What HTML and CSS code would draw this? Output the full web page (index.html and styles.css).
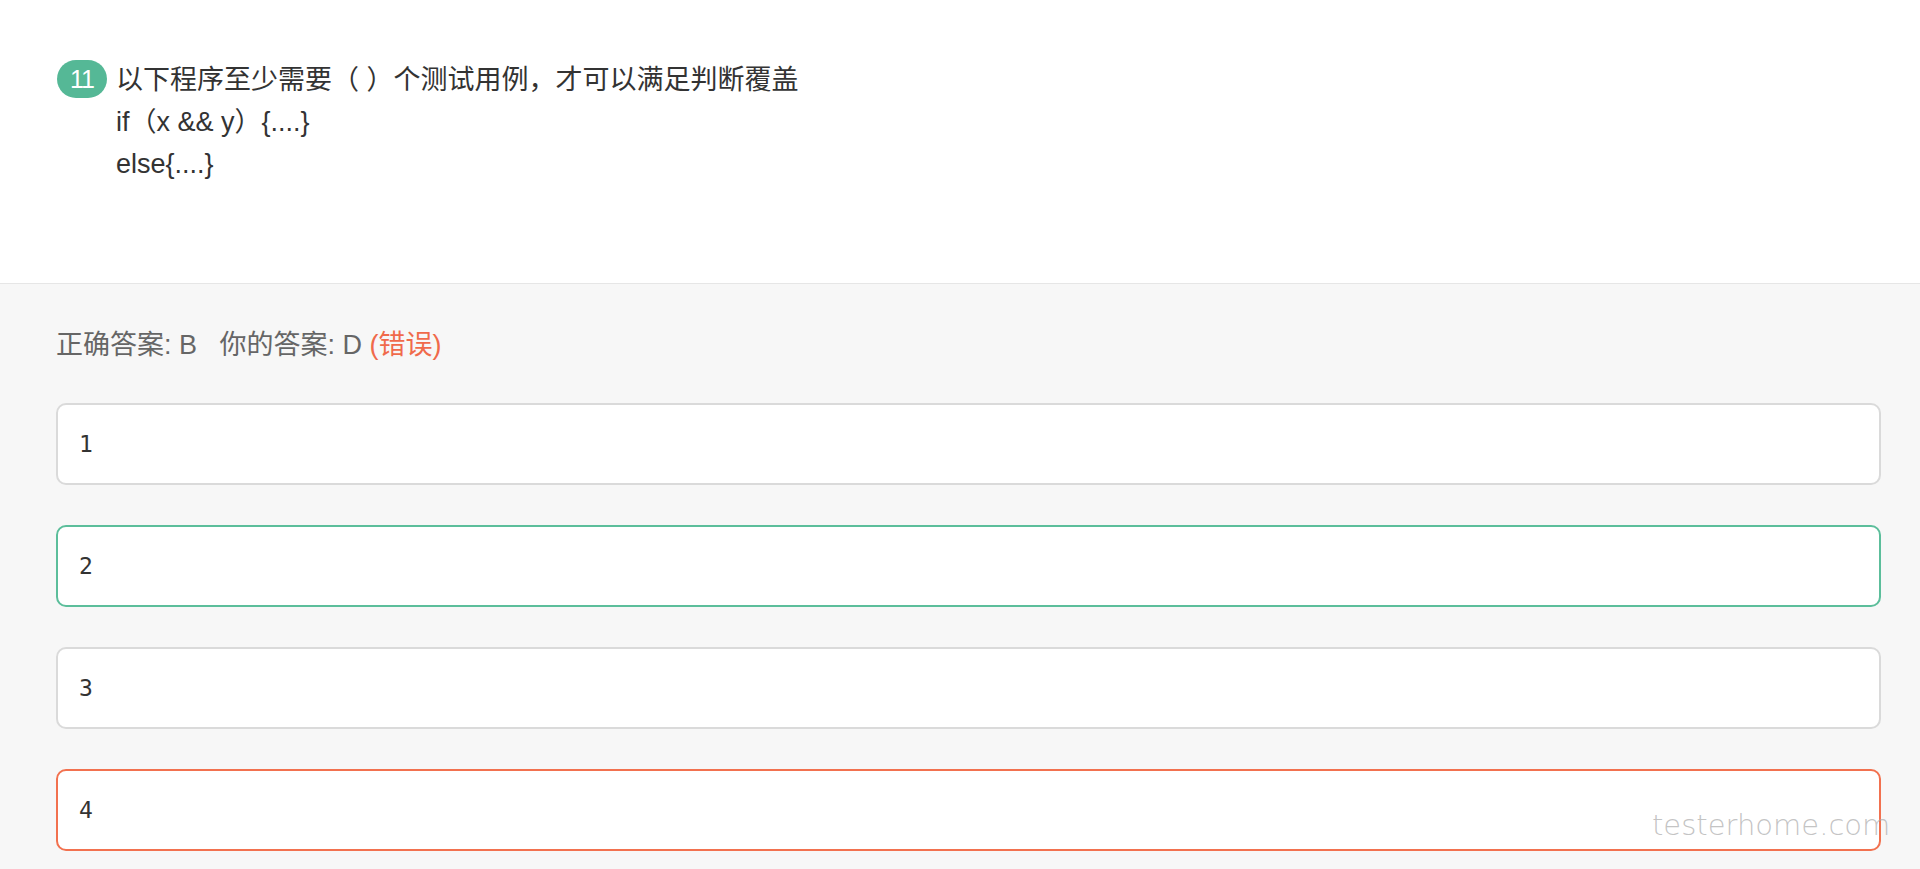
FILE: index.html
```html
<!DOCTYPE html>
<html lang="zh">

<head>
   <meta charset="UTF-8">
   <meta name="viewport" content="width=device-width, initial-scale=1.0">
   <title>判断覆盖</title>
   <link rel="stylesheet" href="styles.css">
</head>

<body>
   <!-- Enunciado -->
   <div class="pregunta">
      <span class="numero">11</span>
      <div class="enunciado">
         <div>以下程序至少需要（ ）个测试用例，才可以满足判断覆盖</div>
         <div>if（x &amp;&amp; y）{....}</div>
         <div>else{....}</div>
      </div>
   </div>

   <!-- Respuesta y opciones -->
   <div class="resultado">
      <div class="respuesta">正确答案: B &nbsp; 你的答案: D <span class="error">(错误)</span></div>

      <div class="opcion">1</div>
      <div class="opcion correcta">2</div>
      <div class="opcion">3</div>
      <div class="opcion incorrecta">4</div>
   </div>

   <div class="marca-agua">testerhome.com</div>
</body>

</html>
```

FILE: styles.css
```css
html {
   background: #f7f7f7;
}

body {
   margin: 0;
   font-family: "Liberation Sans", "Noto Sans CJK SC", sans-serif;
   color: #333;
}

/* Enunciado */
.pregunta {
   display: flex;
   align-items: flex-start;
   gap: 9px;
   height: 284px;
   box-sizing: border-box;
   padding: 59px 56px 0 57px;
   background: #fff;
   border-bottom: 1px solid #e6e6e6;
}

.numero {
   display: flex;
   align-items: center;
   justify-content: center;
   width: 50px;
   height: 38px;
   margin-top: 1px;
   border-radius: 19px;
   background: #55b896;
   color: #fff;
   font-size: 25px;
   letter-spacing: -1px;
}

.enunciado {
   font-size: 27px;
   line-height: 42px;
}

/* Resultado */
.resultado {
   padding: 41px 39px 17px 56px;
}

.respuesta {
   font-size: 27px;
   line-height: 40px;
   color: #666;
   margin-bottom: 38px;
}

.error {
   color: #f06a4b;
}

.opcion {
   display: flex;
   align-items: center;
   height: 82px;
   box-sizing: border-box;
   padding: 0 21px;
   margin-bottom: 40px;
   background: #fff;
   border: 2px solid #dadada;
   border-radius: 10px;
   font-family: "DejaVu Sans Mono", monospace;
   font-size: 23px;
   color: #333;
}

.opcion:last-child {
   margin-bottom: 0;
}

.correcta {
   border-color: #5cbe9b;
}

.incorrecta {
   border-color: #f2714f;
}

/* Marca de agua */
.marca-agua {
   position: absolute;
   left: 1652px;
   top: 808px;
   font-family: "DejaVu Sans", sans-serif;
   font-weight: 200;
   font-size: 29px;
   color: rgba(170, 170, 170, 0.7);
}
```
